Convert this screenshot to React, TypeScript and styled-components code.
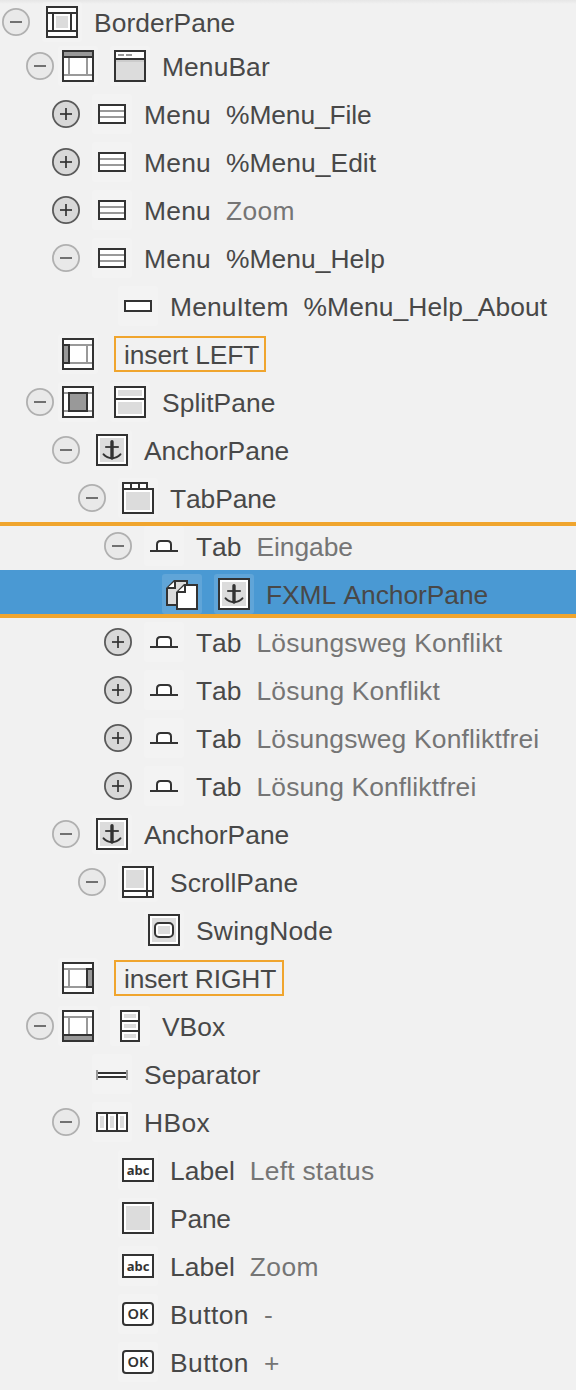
import React from "react";
import styled, { createGlobalStyle, css } from "styled-components";

const DARK = "#333333";
const MID = "#999999";
const LIGHT = "#dcdcdc";
const ORANGE = "#f0a52e";

const GlobalStyle = createGlobalStyle`
  body {
    margin: 0;
    background: #f1f1f1;
  }
`;

const Tree = styled.div`
  display: flex;
  flex-direction: column;
  width: 576px;
  height: 1390px;
  overflow: hidden;
  background: linear-gradient(#e6e6e6, #f1f1f1 4px);
  font-family: "Liberation Sans", Arial, sans-serif;
  font-size: 26.4px;
  line-height: 30px;
  color: #484848;
`;

const Row = styled.div<{ $level: number; $selected?: boolean; $edge?: "top" | "bottom" }>`
  display: flex;
  align-items: center;
  flex: none;
  box-sizing: border-box;
  height: ${(p) => (p.$level === 0 ? 42 : 48)}px;
  padding-top: ${(p) => (p.$level === 0 ? 2 : 0)}px;
  padding-left: ${(p) => (p.$level === 0 ? 2 : p.$level * 26)}px;
  white-space: pre;
  ${(p) => p.$selected && css`background: #4a99d3;`}
  ${(p) => p.$edge === "top" && css`box-shadow: inset 0 4px ${ORANGE};`}
  ${(p) => p.$edge === "bottom" && css`box-shadow: inset 0 -4px ${ORANGE};`}
`;

const ToggleSlot = styled.div<{ $tight: boolean }>`
  flex: none;
  width: 28px;
  height: 28px;
  margin-right: ${(p) => (p.$tight ? 4 : 12)}px;
`;

const Tile = styled.div<{ $selected?: boolean }>`
  display: grid;
  place-items: center;
  flex: none;
  width: 40px;
  height: 40px;
  margin-right: 12px;
  border-radius: 3px;
  background: rgba(255, 255, 255, ${(p) => (p.$selected ? 0.12 : 0.18)});
`;

const Title = styled.span<{ $tracking: number }>`
  padding-top: 2px;
  font-kerning: none;
  letter-spacing: ${(p) => p.$tracking}px;
`;

const Detail = styled(Title)<{ $muted: boolean }>`
  margin-left: 15px;
  color: ${(p) => (p.$muted ? "#757575" : "inherit")};
`;

const InsertBox = styled.div<{ $width: number }>`
  box-sizing: border-box;
  width: ${(p) => p.$width}px;
  height: 36px;
  margin-left: 4px;
  padding: 2px 0 0 8px;
  border: 2px solid ${ORANGE};
`;

const Svg = styled.svg`
  display: block;
`;

const Toggle = ({ open }: { open: boolean }) => (
  <Svg width="28" height="28" viewBox="0 0 28 28" fill="none">
    <circle cx="14" cy="14" r="13.1" fill={open ? "#e9e9e9" : "#d8d8d8"} stroke={open ? "#b0b0b0" : "#5a5a5a"} strokeWidth="1.8" />
    <path d="M8 14H20" stroke={open ? "#5c5c5c" : "#333"} strokeWidth="1.7" />
    {!open && <path d="M14 8V20" stroke="#333" strokeWidth="1.7" />}
  </Svg>
);

const Frame = ({ x = 0, y = 0, w = 32, h = 32, fill = "#fff", rx = 0 }) => (
  <rect x={x + 1} y={y + 1} width={w - 2} height={h - 2} rx={rx} fill={fill} stroke={DARK} strokeWidth="2" />
);

const Fill = ({ x = 4, y = 4, w = 24, h = 24, c = LIGHT }) => <rect x={x} y={y} width={w} height={h} fill={c} />;

const ICONS: Record<string, React.ReactNode> = {
  border: (
    <>
      <Frame />
      <path d="M2 7H30M2 25H30M7 8V24M25 8V24" stroke={DARK} strokeWidth="2" />
      <Fill x={10} y={10} w={12} h={12} />
    </>
  ),
  regionTop: (
    <>
      <Frame />
      <path d="M7 8V24M25 8V24M2 25H30" stroke={MID} strokeWidth="2" />
      <Fill x={2} y={2} w={28} h={4} c={MID} />
      <Fill x={2} y={6} w={28} h={2} c={DARK} />
    </>
  ),
  regionBottom: (
    <>
      <Frame />
      <path d="M7 8V24M25 8V24M2 7H30" stroke={MID} strokeWidth="2" />
      <Fill x={2} y={26} w={28} h={4} c={MID} />
      <Fill x={2} y={24} w={28} h={2} c={DARK} />
    </>
  ),
  regionLeft: (
    <>
      <Frame />
      <path d="M8 7H30M8 25H30M25 8V24" stroke={MID} strokeWidth="2" />
      <Frame x={0} y={6} w={8} h={20} fill={MID} />
    </>
  ),
  regionRight: (
    <>
      <Frame />
      <path d="M2 7H24M2 25H24M7 8V24" stroke={MID} strokeWidth="2" />
      <Frame x={24} y={6} w={8} h={20} fill={MID} />
    </>
  ),
  regionCenter: (
    <>
      <Frame />
      <path d="M2 7H30M2 25H30" stroke={MID} strokeWidth="2" />
      <Frame x={6} y={6} w={20} h={20} fill={MID} />
    </>
  ),
  menuBar: (
    <>
      <Frame />
      <Fill x={2} y={10} w={28} h={20} />
      <Fill x={2} y={10} w={28} h={2} c="#cccccc" />
      <path d="M2 9H30" stroke={DARK} strokeWidth="2" />
      <path d="M4 5H10M12 5H18" stroke={MID} strokeWidth="2" />
    </>
  ),
  menu: (
    <>
      <Frame x={2} y={6} w={28} h={20} />
      <path d="M4 13H28M4 19H28" stroke={MID} strokeWidth="2" />
    </>
  ),
  menuItem: <Frame x={2} y={10} w={28} h={12} />,
  split: (
    <>
      <Frame />
      <path d="M2 13H30" stroke={DARK} strokeWidth="2" />
      <Fill h={6} />
      <Fill y={16} h={12} />
    </>
  ),
  anchor: (
    <>
      <Frame />
      <Fill />
      <path d="M16 7.7V24" stroke={DARK} strokeWidth="3.4" strokeLinecap="round" />
      <path d="M9.2 13H22.8" stroke={DARK} strokeWidth="1.8" />
      <path d="M7.6 20.4C12 25.4 20 25.4 24.4 20.4" stroke={DARK} strokeWidth="2.1" strokeLinecap="round" />
    </>
  ),
  tabPane: (
    <>
      <Frame w={26} h={8} />
      <path d="M9 1V7M17 1V7" stroke={DARK} strokeWidth="2" />
      <Frame y={6} h={26} />
      <Fill y={10} h={18} />
    </>
  ),
  tab: (
    <>
      <path d="M9 21V14.5Q9 11 12.5 11H19.5Q23 11 23 14.5V21" fill="#fff" stroke={DARK} strokeWidth="2" />
      <path d="M2 21H30" stroke={DARK} strokeWidth="2" />
    </>
  ),
  files: (
    <>
      <path d="M1 10.4L8.4 3H21V27H1Z" fill={LIGHT} stroke={DARK} strokeWidth="2" />
      <path d="M1.5 10H9V3" fill="#fff" stroke={DARK} strokeWidth="2" />
      <path d="M11 14.4L18.4 7H31V31H11Z" fill="#fff" stroke={DARK} strokeWidth="2" />
      <path d="M11.5 14H19V7" fill="#fff" stroke={DARK} strokeWidth="2" />
    </>
  ),
  scroll: (
    <>
      <Frame />
      <path d="M25 2V30M2 25H30" stroke={DARK} strokeWidth="2" />
      <Fill w={18} h={18} />
    </>
  ),
  swing: (
    <>
      <Frame />
      <Fill />
      <Frame x={6} y={8} w={20} h={16} rx={4} />
      <Fill x={10} y={12} w={12} h={8} />
    </>
  ),
  vbox: (
    <>
      <Frame x={6} w={20} />
      <path d="M8 11H24M8 21H24" stroke={DARK} strokeWidth="2" />
      <Fill x={10} y={4} w={12} h={4} />
      <Fill x={10} y={14} w={12} h={4} />
      <Fill x={10} y={24} w={12} h={4} />
    </>
  ),
  hbox: (
    <>
      <Frame y={6} h={20} />
      <path d="M11 8V24M21 8V24" stroke={DARK} strokeWidth="2" />
      <Fill x={4} y={10} w={4} h={12} />
      <Fill x={14} y={10} w={4} h={12} />
      <Fill x={24} y={10} w={4} h={12} />
    </>
  ),
  separator: (
    <>
      <Fill x={2} y={14} w={28} h={6} c="#fff" />
      <path d="M2 15H30M2 19H30" stroke={DARK} strokeWidth="2" />
      <path d="M1 12V22M31 12V22" stroke={MID} strokeWidth="2" />
    </>
  ),
  label: (
    <>
      <Frame y={4} h={24} />
      <text x="16" y="21.3" textAnchor="middle" fontFamily="'Noto Sans', sans-serif" fontSize="13" fontWeight="700" fill={DARK}>abc</text>
    </>
  ),
  pane: (
    <>
      <Frame />
      <Fill />
    </>
  ),
  button: (
    <>
      <Frame y={4} h={24} rx={3} />
      <text x="16" y="21.3" textAnchor="middle" fontFamily="'Noto Sans', sans-serif" fontSize="14.6" fontWeight="600" fill={DARK}>OK</text>
    </>
  ),
};

const Icon = ({ name }: { name: string }) => (
  <Svg width="32" height="32" viewBox="0 0 32 32" fill="none">{ICONS[name]}</Svg>
);

interface Node {
  level: number;
  open?: boolean;
  region?: string;
  icon?: string;
  title?: string;
  track?: number;
  detail?: string;
  detailTrack?: number;
  insert?: string;
  insertWidth?: number;
  selected?: boolean;
  edge?: "top" | "bottom";
}

const NODES: Node[] = [
  { level: 0, open: true, icon: "border", title: "BorderPane", track: 0.05 },
  { level: 1, open: true, region: "regionTop", icon: "menuBar", title: "MenuBar", track: 0.1 },
  { level: 2, open: false, icon: "menu", title: "Menu", track: 0.25, detail: "%Menu_File", detailTrack: -0.1 },
  { level: 2, open: false, icon: "menu", title: "Menu", track: 0.25, detail: "%Menu_Edit", detailTrack: 0.05 },
  { level: 2, open: false, icon: "menu", title: "Menu", track: 0.25, detail: "Zoom", detailTrack: 0.3 },
  { level: 2, open: true, icon: "menu", title: "Menu", track: 0.25, detail: "%Menu_Help", detailTrack: 0.05 },
  { level: 3, icon: "menuItem", title: "MenuItem", track: 0.15, detail: "%Menu_Help_About", detailTrack: 0.1 },
  { level: 1, region: "regionLeft", insert: "insert LEFT", track: -0.1, insertWidth: 152 },
  { level: 1, open: true, region: "regionCenter", icon: "split", title: "SplitPane", track: 0.05 },
  { level: 2, open: true, icon: "anchor", title: "AnchorPane", track: 0 },
  { level: 3, open: true, icon: "tabPane", title: "TabPane", track: -0.1 },
  { level: 4, open: true, icon: "tab", title: "Tab", track: 0, detail: "Eingabe", detailTrack: -0.05, edge: "top" },
  { level: 5, region: "files", icon: "anchor", title: "FXML AnchorPane", track: -0.05, selected: true, edge: "bottom" },
  { level: 4, open: false, icon: "tab", title: "Tab", track: 0, detail: "Lösungsweg Konflikt", detailTrack: 0.2 },
  { level: 4, open: false, icon: "tab", title: "Tab", track: 0, detail: "Lösung Konflikt", detailTrack: 0.2 },
  { level: 4, open: false, icon: "tab", title: "Tab", track: 0, detail: "Lösungsweg Konfliktfrei", detailTrack: 0.18 },
  { level: 4, open: false, icon: "tab", title: "Tab", track: 0, detail: "Lösung Konfliktfrei", detailTrack: 0.15 },
  { level: 2, open: true, icon: "anchor", title: "AnchorPane", track: 0 },
  { level: 3, open: true, icon: "scroll", title: "ScrollPane", track: 0.05 },
  { level: 4, icon: "swing", title: "SwingNode", track: 0.25 },
  { level: 1, region: "regionRight", insert: "insert RIGHT", track: -0.15, insertWidth: 170 },
  { level: 1, open: true, region: "regionBottom", icon: "vbox", title: "VBox", track: 0 },
  { level: 2, icon: "separator", title: "Separator", track: 0.05 },
  { level: 2, open: true, icon: "hbox", title: "HBox", track: 0.4 },
  { level: 3, icon: "label", title: "Label", track: 0.05, detail: "Left status", detailTrack: 0.25 },
  { level: 3, icon: "pane", title: "Pane", track: -0.2 },
  { level: 3, icon: "label", title: "Label", track: 0.05, detail: "Zoom", detailTrack: 0.4 },
  { level: 3, icon: "button", title: "Button", track: 0.45, detail: "-", detailTrack: 0 },
  { level: 3, icon: "button", title: "Button", track: 0.45, detail: "+", detailTrack: 0 },
];

const TreeRow = ({ node }: { node: Node }) => (
  <Row $level={node.level} $selected={node.selected} $edge={node.edge}>
    <ToggleSlot $tight={!!node.region}>{node.open !== undefined && <Toggle open={node.open} />}</ToggleSlot>
    {node.region && (
      <Tile $selected={node.selected}>
        <Icon name={node.region} />
      </Tile>
    )}
    {node.icon && (
      <Tile $selected={node.selected}>
        <Icon name={node.icon} />
      </Tile>
    )}
    {node.insert && (
      <InsertBox $width={node.insertWidth ?? 152}>
        <Title $tracking={node.track ?? 0}>{node.insert}</Title>
      </InsertBox>
    )}
    {node.title && <Title $tracking={node.track ?? 0}>{node.title}</Title>}
    {node.detail && (
      <Detail $tracking={node.detailTrack ?? 0} $muted={!node.detail.startsWith("%")}>
        {node.detail}
      </Detail>
    )}
  </Row>
);

export default function App() {
  return (
    <>
      <GlobalStyle />
      <Tree>
        {NODES.map((node, i) => (
          <TreeRow key={i} node={node} />
        ))}
      </Tree>
    </>
  );
}
